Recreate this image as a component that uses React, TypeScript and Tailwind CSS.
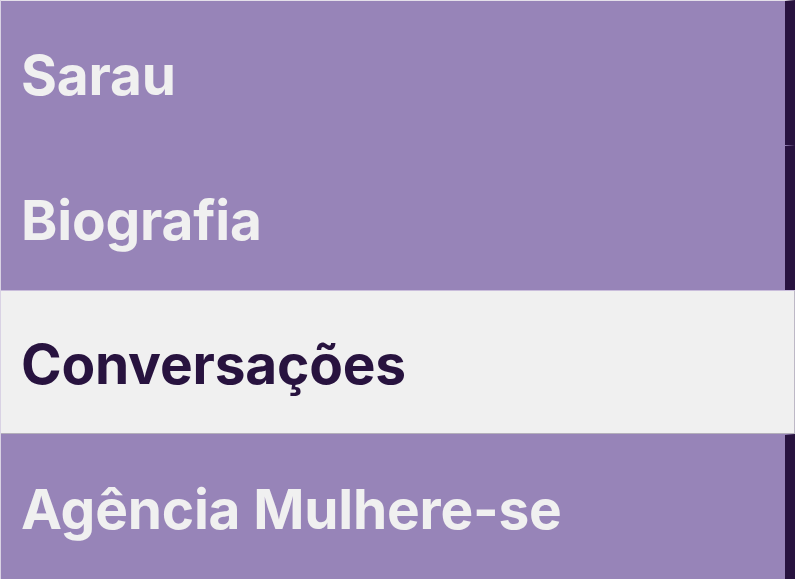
import React from "react";

const items = [
  { label: "Sarau", active: false, h: "h-[145px]" },
  { label: "Biografia", active: false, h: "h-[145px]" },
  { label: "Conversações", active: true, h: "h-[144px]" },
  { label: "Agência Mulhere-se", active: false, h: "h-[145px]" },
];

export default function App() {
  return (
    <div
      className="w-[795px] h-[579px] overflow-hidden bg-[#9784b8] border-l border-[#d9d2e4]"
      style={{ fontFamily: "Inter, 'Noto Sans', sans-serif" }}
    >
      {items.map((item, i) =>
        item.active ? (
          <div
            key={item.label}
            className={`${item.h} flex items-center pl-5 pt-1 bg-[#f0f0f0] border-t border-t-[#c9bddb] border-b border-b-[#b3afba] border-r border-r-[#bdb8c6] text-[#28133f]`}
          >
            <span className="text-[55px] font-bold tracking-[-0.2px]">{item.label}</span>
          </div>
        ) : (
          <div
            key={item.label}
            className={`${item.h} flex items-center pl-5 pt-1 border-t ${i === 0 ? "border-t-[#e4e0ea]" : "border-t-[#9784b8]"} border-r-[10px] border-r-[#28133f] text-[#f0f0f0]`}
          >
            <span className="text-[55px] font-bold tracking-[-0.2px]">{item.label}</span>
          </div>
        )
      )}
    </div>
  );
}
